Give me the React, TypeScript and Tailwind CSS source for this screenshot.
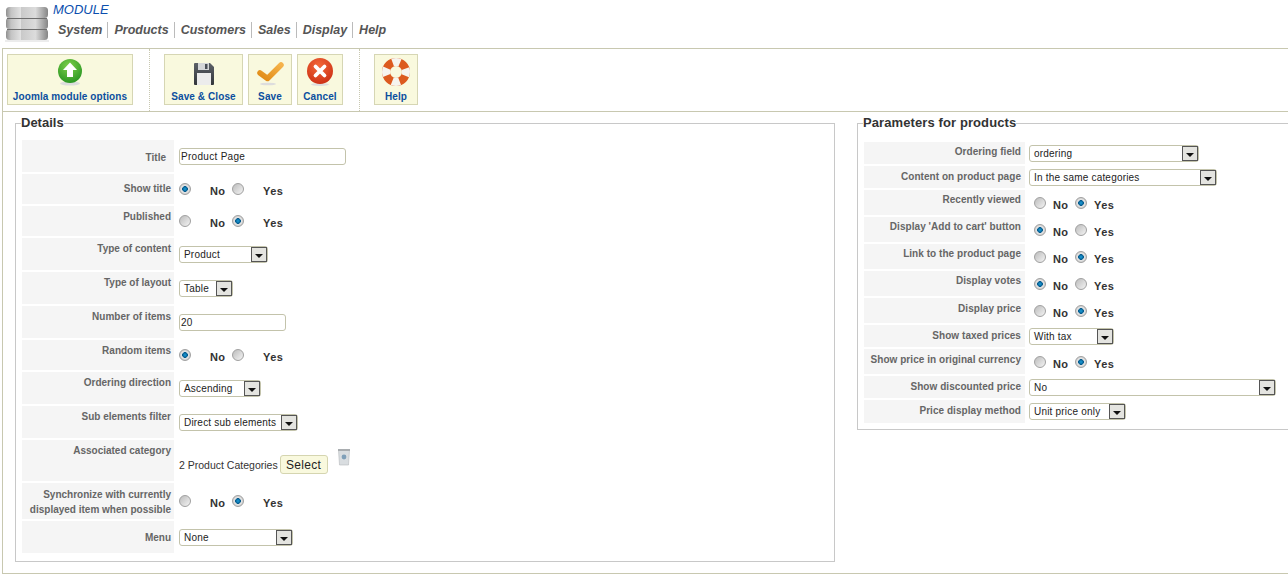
const font = "font-['Liberation_Sans',Arial,sans-serif]";

const menu = ["System", "Products", "Customers", "Sales", "Display", "Help"];

type Row = {
  label: React.ReactNode;
  h: string;
  lp: string;
  cp: string;
  kind: "input" | "radio" | "select" | "category";
  value?: string;
  w?: string;
  on?: "no" | "yes";
};

const details: Row[] = [
  { label: <span className="mr-[5px]">Title</span>, h: "h-[32px]", lp: "pt-[11px]", cp: "pt-[8px]", kind: "input", value: "Product Page", w: "w-[167px]" },
  { label: "Show title", h: "h-[30px]", lp: "pt-[8px]", cp: "pt-[9px]", kind: "radio", on: "no" },
  { label: "Published", h: "h-[30px]", lp: "pt-[4px]", cp: "pt-[9px]", kind: "radio", on: "yes" },
  { label: "Type of content", h: "h-[32px]", lp: "pt-[4px]", cp: "pt-[8px]", kind: "select", value: "Product", w: "w-[89px]" },
  { label: "Type of layout", h: "h-[32px]", lp: "pt-[4px]", cp: "pt-[8px]", kind: "select", value: "Table", w: "w-[54px]" },
  { label: "Number of items", h: "h-[32px]", lp: "pt-[4px]", cp: "pt-[8px]", kind: "input", value: "20", w: "w-[107px]" },
  { label: "Random items", h: "h-[30px]", lp: "pt-[4px]", cp: "pt-[9px]", kind: "radio", on: "no" },
  { label: "Ordering direction", h: "h-[32px]", lp: "pt-[4px]", cp: "pt-[8px]", kind: "select", value: "Ascending", w: "w-[82px]" },
  { label: "Sub elements filter", h: "h-[32px]", lp: "pt-[4px]", cp: "pt-[8px]", kind: "select", value: "Direct sub elements", w: "w-[119px]" },
  { label: "Associated category", h: "h-[41px]", lp: "pt-[4px]", cp: "pt-[8px]", kind: "category" },
  {
    label: (
      <>
        Synchronize with currently
        <br />
        displayed item when possible
      </>
    ),
    h: "h-[36px]",
    lp: "pt-[4px] leading-[15px]",
    cp: "pt-[12px]",
    kind: "radio",
    on: "yes",
  },
  { label: "Menu", h: "h-[32px]", lp: "pt-[10px]", cp: "pt-[8px]", kind: "select", value: "None", w: "w-[114px]" },
];

const params: Row[] = [
  { label: "Ordering field", h: "h-[22px]", lp: "pt-[3px]", cp: "pt-[3px]", kind: "select", value: "ordering", w: "w-[170px]" },
  { label: "Content on product page", h: "h-[22px]", lp: "pt-[4px]", cp: "pt-[3px]", kind: "select", value: "In the same categories", w: "w-[188px]" },
  { label: "Recently viewed", h: "h-[25px]", lp: "pt-[3px]", cp: "pt-[7px]", kind: "radio", on: "yes" },
  { label: "Display 'Add to cart' button", h: "h-[25px]", lp: "pt-[3px]", cp: "pt-[7px]", kind: "radio", on: "no" },
  { label: "Link to the product page", h: "h-[25px]", lp: "pt-[3px]", cp: "pt-[7px]", kind: "radio", on: "yes" },
  { label: "Display votes", h: "h-[25px]", lp: "pt-[3px]", cp: "pt-[7px]", kind: "radio", on: "no" },
  { label: "Display price", h: "h-[25px]", lp: "pt-[4px]", cp: "pt-[7px]", kind: "radio", on: "yes" },
  { label: "Show taxed prices", h: "h-[22px]", lp: "pt-[4px]", cp: "pt-[3px]", kind: "select", value: "With tax", w: "w-[85px]" },
  { label: "Show price in original currency", h: "h-[25px]", lp: "pt-[4px]", cp: "pt-[7px]", kind: "radio", on: "yes" },
  { label: "Show discounted price", h: "h-[22px]", lp: "pt-[4px]", cp: "pt-[3px]", kind: "select", value: "No", w: "w-[247px]" },
  { label: "Price display method", h: "h-[23px]", lp: "pt-[4px]", cp: "pt-[3px]", kind: "select", value: "Unit price only", w: "w-[97px]" },
];

const DbIcon = () => (
  <svg width="44" height="36" viewBox="0 0 44 36">
    <defs>
      <linearGradient id="db" x1="0" x2="1" y1="0" y2="0">
        <stop offset="0" stopColor="#8f8f8f" />
        <stop offset="0.12" stopColor="#c4c4c4" />
        <stop offset="0.35" stopColor="#e2e2e2" />
        <stop offset="0.36" stopColor="#c9c9c9" />
        <stop offset="0.7" stopColor="#dcdcdc" />
        <stop offset="1" stopColor="#858585" />
      </linearGradient>
    </defs>
    <rect x="1" y="1" width="42" height="11" rx="3.5" fill="url(#db)" />
    <rect x="1" y="12" width="42" height="11" rx="3" fill="url(#db)" />
    <rect x="1" y="23" width="42" height="11" rx="3.5" fill="url(#db)" />
    <path d="M2 12.5h40M2 23.5h40" stroke="#6e6e6e" strokeWidth="1" />
    <rect x="0" y="34" width="44" height="2" fill="#ececec" />
  </svg>
);

const UpIcon = () => (
  <svg width="28" height="28" viewBox="0 0 28 28">
    <defs>
      <radialGradient id="up" cx="0.45" cy="0.3" r="0.8">
        <stop offset="0" stopColor="#7fd04a" />
        <stop offset="1" stopColor="#1f8f1e" />
      </radialGradient>
    </defs>
    <ellipse cx="14" cy="25.5" rx="10" ry="2" fill="#ddd" />
    <circle cx="14" cy="13" r="12" fill="url(#up)" />
    <path d="M14 4.5 21 12h-4v7h-6v-7H7z" fill="#fff" />
  </svg>
);

const SaveIcon = () => (
  <svg width="24" height="28" viewBox="0 0 24 28">
    <defs>
      <linearGradient id="fl" x1="0" x2="0" y1="0" y2="1">
        <stop offset="0" stopColor="#5c6168" />
        <stop offset="1" stopColor="#33363b" />
      </linearGradient>
    </defs>
    <path d="M2 6q0-1 1-1h15l4 4v17q0 1-1 1H3q-1 0-1-1z" fill="url(#fl)" />
    <rect x="6" y="5" width="11" height="7" fill="#d4d6d8" />
    <rect x="13" y="6" width="2.5" height="5" fill="#4a4f57" />
    <rect x="5" y="15" width="14" height="12" fill="#ececec" />
  </svg>
);

const CheckIcon = () => (
  <svg width="30" height="28" viewBox="0 0 30 28">
    <defs>
      <linearGradient id="ck" x1="0" x2="1" y1="1" y2="0">
        <stop offset="0" stopColor="#e08a14" />
        <stop offset="1" stopColor="#f5b24a" />
      </linearGradient>
    </defs>
    <ellipse cx="13" cy="26" rx="8" ry="1.3" fill="#ddd" />
    <path d="M5 15 12.5 20.5 26 7" fill="none" stroke="url(#ck)" strokeWidth="5.5" strokeLinecap="round" strokeLinejoin="round" />
  </svg>
);

const CancelIcon = () => (
  <svg width="28" height="28" viewBox="0 0 28 28">
    <defs>
      <radialGradient id="cn" cx="0.45" cy="0.3" r="0.8">
        <stop offset="0" stopColor="#f4693a" />
        <stop offset="1" stopColor="#c82a10" />
      </radialGradient>
    </defs>
    <ellipse cx="14" cy="26.5" rx="9" ry="1.5" fill="#ddd" />
    <circle cx="14" cy="13" r="13" fill="url(#cn)" />
    <path d="M9.5 8.5 18.5 17.5M18.5 8.5 9.5 17.5" stroke="#fff" strokeWidth="3.8" strokeLinecap="round" />
  </svg>
);

const HelpIcon = () => (
  <svg width="28" height="28" viewBox="0 0 28 28">
    <circle cx="14" cy="14" r="10" fill="none" stroke="#dc5a1f" strokeWidth="8" />
    <circle cx="14" cy="14" r="10" fill="none" stroke="#f6f4ef" strokeWidth="8" strokeDasharray="7.5 8.2" strokeDashoffset="3.75" />
  </svg>
);

const TrashIcon = () => (
  <svg width="14" height="18" viewBox="0 0 14 18">
    <path d="M1.5 2h11l-1 15h-9z" fill="#d9dde0" stroke="#b5b9bc" strokeWidth="0.6" />
    <rect x="1" y="1" width="12" height="2" fill="#a9adb0" />
    <circle cx="7" cy="9" r="2.4" fill="#7f9fb8" />
  </svg>
);

const Radio = ({ on }: { on: boolean }) => (
  <span
    className={`block w-[12px] h-[12px] rounded-full border border-[#a0a0a0] ${
      on
        ? "bg-[radial-gradient(circle_closest-side,#1a9fdc_0,#075a8c_52%,#e8e8e8_62%,#d0d0d0_100%)]"
        : "bg-[linear-gradient(135deg,#bcbcbc,#f4f4f4)]"
    }`}
  />
);

const RadioPair = ({ on, wide }: { on?: "no" | "yes"; wide: boolean }) => (
  <div className="flex items-start font-bold text-[11px] leading-[13px] text-[#333] tracking-[0.4px]">
    <Radio on={on === "no"} />
    <span className={wide ? "pt-[2px] ml-[19px] w-[22px]" : "pt-[2px] ml-[7px] w-[22px]"}>No</span>
    <Radio on={on === "yes"} />
    <span className={wide ? "pt-[2px] ml-[19px]" : "pt-[2px] ml-[7px]"}>Yes</span>
  </div>
);

const Select = ({ value, w }: { value?: string; w?: string }) => (
  <div className={`${w} h-[17px] flex items-center justify-between rounded-[3px] border border-[#c3c3ab] pl-[4px] bg-white text-[10px] text-[#222] tracking-[0.2px]`}>
    <span className="whitespace-nowrap">{value}</span>
    <span className="w-[16px] h-[15px] flex items-center justify-center border border-[#555] bg-[#e4e4e0] shrink-0">
      <span className="mt-[3px] border-x-[4px] border-t-[4px] border-x-transparent border-t-[#111]" />
    </span>
  </div>
);

const Control = ({ row, wide }: { row: Row; wide: boolean }) => {
  if (row.kind === "input") {
    return (
      <div className={`${row.w} h-[17px] flex items-center rounded-[3px] border border-[#c3c3ab] pl-[1px] text-[10px] text-[#222] tracking-[0.3px]`}>
        {row.value}
      </div>
    );
  }
  if (row.kind === "radio") return <RadioPair on={row.on} wide={wide} />;
  if (row.kind === "select") return <Select value={row.value} w={row.w} />;
  return (
    <div className="flex items-start">
      <span className="mt-[11px] text-[10.5px] leading-[13px] text-[#333] whitespace-nowrap">2 Product Categories</span>
      <span className="ml-[2px] mt-[7px] w-[48px] h-[19px] flex items-center justify-center rounded-[3px] border border-[#d5d5b0] bg-[#f9f9de] text-[12px] text-[#222] tracking-[0.3px]">
        Select
      </span>
      <span className="ml-[9px]">
        <TrashIcon />
      </span>
    </div>
  );
};

const FormRows = ({ rows, labelW, right }: { rows: Row[]; labelW: string; right: boolean }) => (
  <div className="flex flex-col gap-[2px]">
    {rows.map((row, index) => (
      <div key={index} className={`flex ${row.h}`}>
        <div className={`${labelW} ${row.lp} shrink-0 bg-[#f5f5f5] text-right font-bold text-[10px] leading-[13px] text-[#666] whitespace-nowrap ${right ? "pr-[4px] tracking-[0.05px]" : "pr-[3px]"}`}>
          {row.label}
        </div>
        <div className={`${row.cp} ${right ? (row.kind === "radio" ? "pl-[9px]" : "pl-[4px]") : "pl-[5px]"}`}>
          <Control row={row} wide={!right} />
        </div>
      </div>
    ))}
  </div>
);

const ToolButton = ({ icon, text, w }: { icon: React.ReactNode; text: string; w: string }) => (
  <div className={`${w} h-[51px] flex flex-col items-center border border-[#d6d6b4] bg-[#f9f9de] pt-[1px]`}>
    <div className="h-[32px] flex items-center justify-center">{icon}</div>
    <span className="mt-[3px] font-bold text-[10px] leading-[12px] text-[#0b4f9e] tracking-[0.1px] whitespace-nowrap">{text}</span>
  </div>
);

export default function App() {
  return (
    <div className={`w-[1288px] h-[577px] overflow-hidden bg-white ${font}`}>
      <header className="h-[48px] flex pl-[5px] pt-[6px]">
        <DbIcon />
        <div className="ml-[4px] -mt-[6px]">
          <div className="italic font-medium text-[13px] leading-[17px] text-[#0b4fae] pt-[1px]">MODULE</div>
          <nav className="flex ml-[5px] mt-[4px]">
            {menu.map((item, index) => (
              <span
                key={item}
                className={`font-bold italic text-[12.5px] leading-[16px] text-[#555] ${
                  index < menu.length - 1 ? "border-r border-[#bbb] pr-[5px] mr-[6px]" : ""
                }`}
              >
                {item}
              </span>
            ))}
          </nav>
        </div>
      </header>

      <div className="ml-[2px] h-[526px] border border-r-0 border-[#c8c8b0]">
        <div className="h-[63px] flex border-b border-[#c8c8b0]">
          <div className="flex items-start pl-[4px] pt-[5px] pr-[16px] border-r border-dotted border-[#c8c8b0]">
            <ToolButton icon={<UpIcon />} text="Joomla module options" w="w-[126px]" />
          </div>
          <div className="flex items-start gap-[5px] pl-[14px] pt-[5px] pr-[16px] border-r border-dotted border-[#c8c8b0]">
            <ToolButton icon={<SaveIcon />} text="Save & Close" w="w-[79px]" />
            <ToolButton icon={<CheckIcon />} text="Save" w="w-[44px]" />
            <ToolButton icon={<CancelIcon />} text="Cancel" w="w-[46px]" />
          </div>
          <div className="flex items-start pl-[14px] pt-[5px]">
            <ToolButton icon={<HelpIcon />} text="Help" w="w-[44px]" />
          </div>
        </div>

        <div className="flex items-start pl-[12px] pt-[3px]">
          <fieldset className="w-[820px] h-[447px] shrink-0 border border-[#c8c8c8] pl-[6px] pr-[6px]">
            <legend className="-ml-px font-bold text-[13px] leading-[16px] text-[#333] mb-[9px]">Details</legend>
            <FormRows rows={details} labelW="w-[152px]" right={false} />
          </fieldset>
          <fieldset className="ml-[22px] w-[450px] h-[315px] shrink-0 border border-[#c8c8c8] pl-[6px]">
            <legend className="-ml-px font-bold text-[13px] leading-[16px] text-[#333] tracking-[0.1px] mb-[11px]">Parameters for products</legend>
            <FormRows rows={params} labelW="w-[161px]" right={true} />
          </fieldset>
        </div>
      </div>
    </div>
  );
}
